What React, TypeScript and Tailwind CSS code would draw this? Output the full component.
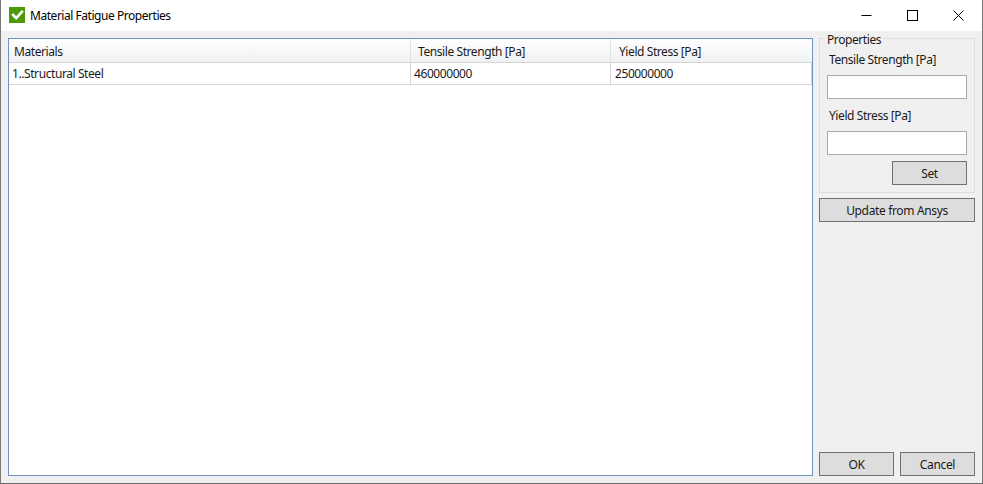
import React from 'react';

const font = "font-['Noto_Sans','Open_Sans',sans-serif]";

const DialogButton: React.FC<{ label: string; className?: string }> = ({ label, className = '' }) => (
  <button className={`h-6 border border-[#707070] bg-[#dddddd] pt-[1px] text-[12px] leading-[22px] tracking-[-0.35px] text-[#1a1a1a] ${className}`}>
    {label}
  </button>
);

const App: React.FC = () => {
  return (
    <div className={`flex h-[484px] w-[983px] flex-col border-x border-b border-x-[#7a7a7a] border-b-[#6b6b6b] bg-[#f0f0f0] text-[12px] tracking-[-0.42px] text-[#1a1a1a] ${font}`}>
      {/* title bar */}
      <div className="flex h-[31px] shrink-0 items-center bg-white">
        <svg className="ml-[8px] mt-[-1px]" width="16" height="16" viewBox="0 0 16 16">
          <rect width="16" height="16" fill="#4e9a06" />
          <path d="M3.2 7 L7.2 11.2 L13.8 3.8" fill="none" stroke="#ffffff" strokeWidth="2.6" />
        </svg>
        <span className="ml-[5px] tracking-[-0.46px] text-black">Material Fatigue Properties</span>
        <div className="ml-auto flex items-center text-black">
          <svg className="mr-[35px]" width="11" height="11" viewBox="0 0 11 11">
            <path d="M0.5 5.5 H10.5" stroke="#000" strokeWidth="1" />
          </svg>
          <svg className="mr-[35px]" width="11" height="11" viewBox="0 0 11 11">
            <rect x="0.5" y="0.5" width="10" height="10" fill="none" stroke="#000" strokeWidth="1" />
          </svg>
          <svg className="mr-[18px]" width="11" height="11" viewBox="0 0 11 11">
            <path d="M0.5 0.5 L10.5 10.5 M10.5 0.5 L0.5 10.5" stroke="#000" strokeWidth="1" />
          </svg>
        </div>
      </div>

      <div className="flex min-h-0 flex-1 p-[7px]">
        {/* materials grid */}
        <div className="w-[805px] shrink-0 border border-[#6b93bd] bg-white">
          <div className="flex h-[24px] border-b border-[#d5d5d5] bg-gradient-to-b from-white to-[#f0f1f3] leading-[25px]">
            <div className="w-[402px] border-r border-[#e3e3e3] pl-[5px]">Materials</div>
            <div className="w-[200px] border-r border-[#e3e3e3] pl-[7px]">Tensile Strength [Pa]</div>
            <div className="flex-1 pl-[8px]">Yield Stress [Pa]</div>
          </div>
          <div className="flex h-[22px] border-b border-[#d5d5d5] leading-[21px]">
            <div className="w-[402px] border-r border-[#d5d5d5] pl-[3px]">1..Structural Steel</div>
            <div className="w-[200px] border-r border-[#d5d5d5] pl-[3px]">460000000</div>
            <div className="flex-1 border-r border-[#d5d5d5] pl-[4px]">250000000</div>
          </div>
        </div>

        {/* properties panel */}
        <div className="ml-[6px] flex w-[156px] shrink-0 flex-col">
          <div className="relative h-[155px] border border-[#d5dfe5] px-[7px] pt-[13px]">
            <span className="absolute left-[5px] top-[-7px] bg-[#f0f0f0] px-[2px] leading-[16px]">Properties</span>
            <div className="pl-[2px] leading-[16px]">Tensile Strength [Pa]</div>
            <div className="mt-[7px] h-[24px] w-[140px] border border-[#a9a9b0] bg-white" />
            <div className="mt-[9px] pl-[2px] leading-[16px]">Yield Stress [Pa]</div>
            <div className="mt-[7px] h-[24px] w-[140px] border border-[#a9a9b0] bg-white" />
            <div className="mt-[6px] flex w-[140px] justify-end">
              <DialogButton label="Set" className="w-[75px]" />
            </div>
          </div>
          <DialogButton label="Update from Ansys" className="mt-[5px] w-full" />
          <div className="mt-auto flex justify-between">
            <DialogButton label="OK" className="w-[75px]" />
            <DialogButton label="Cancel" className="w-[75px]" />
          </div>
        </div>
      </div>
    </div>
  );
};

export default App;
